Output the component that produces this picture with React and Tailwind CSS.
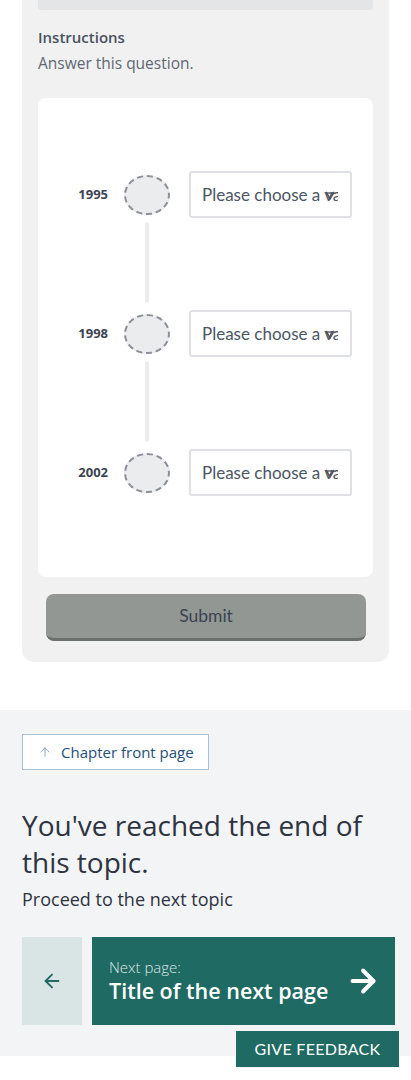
import { ArrowUp, ArrowLeft, ArrowRight } from 'lucide-react'

const raleway = { fontFamily: '"Open Sans", "Noto Sans", sans-serif' }
const lato = { fontFamily: 'Lato, "Liberation Sans", sans-serif' }

const years = ['1995', '1998', '2002']

function TimelineRow({ year }) {
  return (
    <div className="flex h-[47px] items-center">
      <div className="w-[70px] text-right text-[13px] font-bold text-[#3b4452]" style={raleway}>
        {year}
      </div>
      <div className="ml-[16px] h-[40px] w-[46px] rounded-[50%] border-2 border-dashed border-[#8a8f98] bg-[#ebecee]" />
      <div
        className="relative ml-[19px] flex h-[47px] w-[163px] items-center rounded-[3px] border-2 border-[#dfe0e4] bg-white pl-[11px]"
        style={lato}
      >
        <span className="block w-[136px] overflow-hidden whitespace-nowrap text-[17px] text-[#4b5563]">
          Please choose a value
        </span>
        <svg width="10" height="10" viewBox="0 0 10 10" className="absolute left-[134px] top-[17px]">
          <path d="M1 2 L5 9 L9 2" fill="none" stroke="#4b5563" strokeWidth="1.6" />
          <path d="M2 3 H8" stroke="#4b5563" strokeWidth="1.4" />
        </svg>
      </div>
    </div>
  )
}

function Connector() {
  return (
    <div className="h-[92px] pt-[4px]">
      <div className="ml-[107px] h-[81px] w-[4px] rounded-full bg-[#ececec]" />
    </div>
  )
}

export default function App() {
  return (
    <div className="min-h-[1080px] bg-white">
      {/* question card */}
      <div className="mx-[22px] rounded-b-[12px] bg-[#f1f1f1] px-[16px] pb-[21px]">
        <div className="h-[10px] rounded-b-[4px] bg-[#e4e5e7]" />
        <div className="pt-[16px] text-[15px] leading-[22px]" style={raleway}>
          <div className="font-semibold text-[#4a5261]">Instructions</div>
          <div className="mt-[4px] text-[15.5px] text-[#5f6875]">Answer this question.</div>
        </div>

        <div className="mt-[24px] h-[479px] rounded-[8px] bg-white pt-[73px]">
          {years.map((y, i) => (
            <div key={y}>
              <TimelineRow year={y} />
              {i < years.length - 1 && <Connector />}
            </div>
          ))}
        </div>

        <button
          className="mx-[8px] mt-[17px] block h-[47px] w-[320px] rounded-[8px] border-b-[3px] border-[#6a706d] bg-[#929794] text-[17.5px] text-[#3a4250]"
          style={lato}
        >
          Submit
        </button>
      </div>

      {/* end of topic */}
      <div className="mt-[48px] bg-[#f3f4f6] pb-[31px] pl-[22px] pr-[16px] pt-[24px]" style={raleway}>
        <button className="flex h-[36px] w-[187px] items-center gap-[9px] border border-[#a9c0d6] bg-white pl-[15px] text-[15px] text-[#1f4f7a]">
          <ArrowUp size={14} strokeWidth={1.5} className="text-[#7f9ab4]" />
          Chapter front page
        </button>

        <h2 className="mt-[37px] text-[28px] font-medium leading-[37px] text-[#2d3340]">
          You've reached the end of this topic.
        </h2>
        <p className="mt-[6px] text-[18px] leading-[24px] text-[#2d3340]">Proceed to the next topic</p>

        <div className="mt-[26px] flex h-[88px] gap-[10px]">
          <div className="flex w-[60px] items-center justify-center bg-[#d8e5e4]">
            <ArrowLeft size={22} strokeWidth={2} className="text-[#206a64]" />
          </div>
          <div className="flex flex-1 items-center justify-between bg-[#206a64] pl-[17px] pr-[14px]">
            <div className="text-white">
              <div className="text-[15px] font-light leading-[20px] text-[#dbe7e6]">Next page:</div>
              <div className="text-[21.5px] font-semibold leading-[28px]">Title of the next page</div>
            </div>
            <ArrowRight size={36} strokeWidth={2.6} className="text-white" />
          </div>
        </div>
      </div>

      <button
        className="fixed bottom-[13px] right-[12px] h-[36px] w-[163px] bg-[#206a64] text-[16px] tracking-[0.3px] text-white outline outline-1 outline-[#f3f4f6]"
        style={lato}
      >
        GIVE FEEDBACK
      </button>
    </div>
  )
}
